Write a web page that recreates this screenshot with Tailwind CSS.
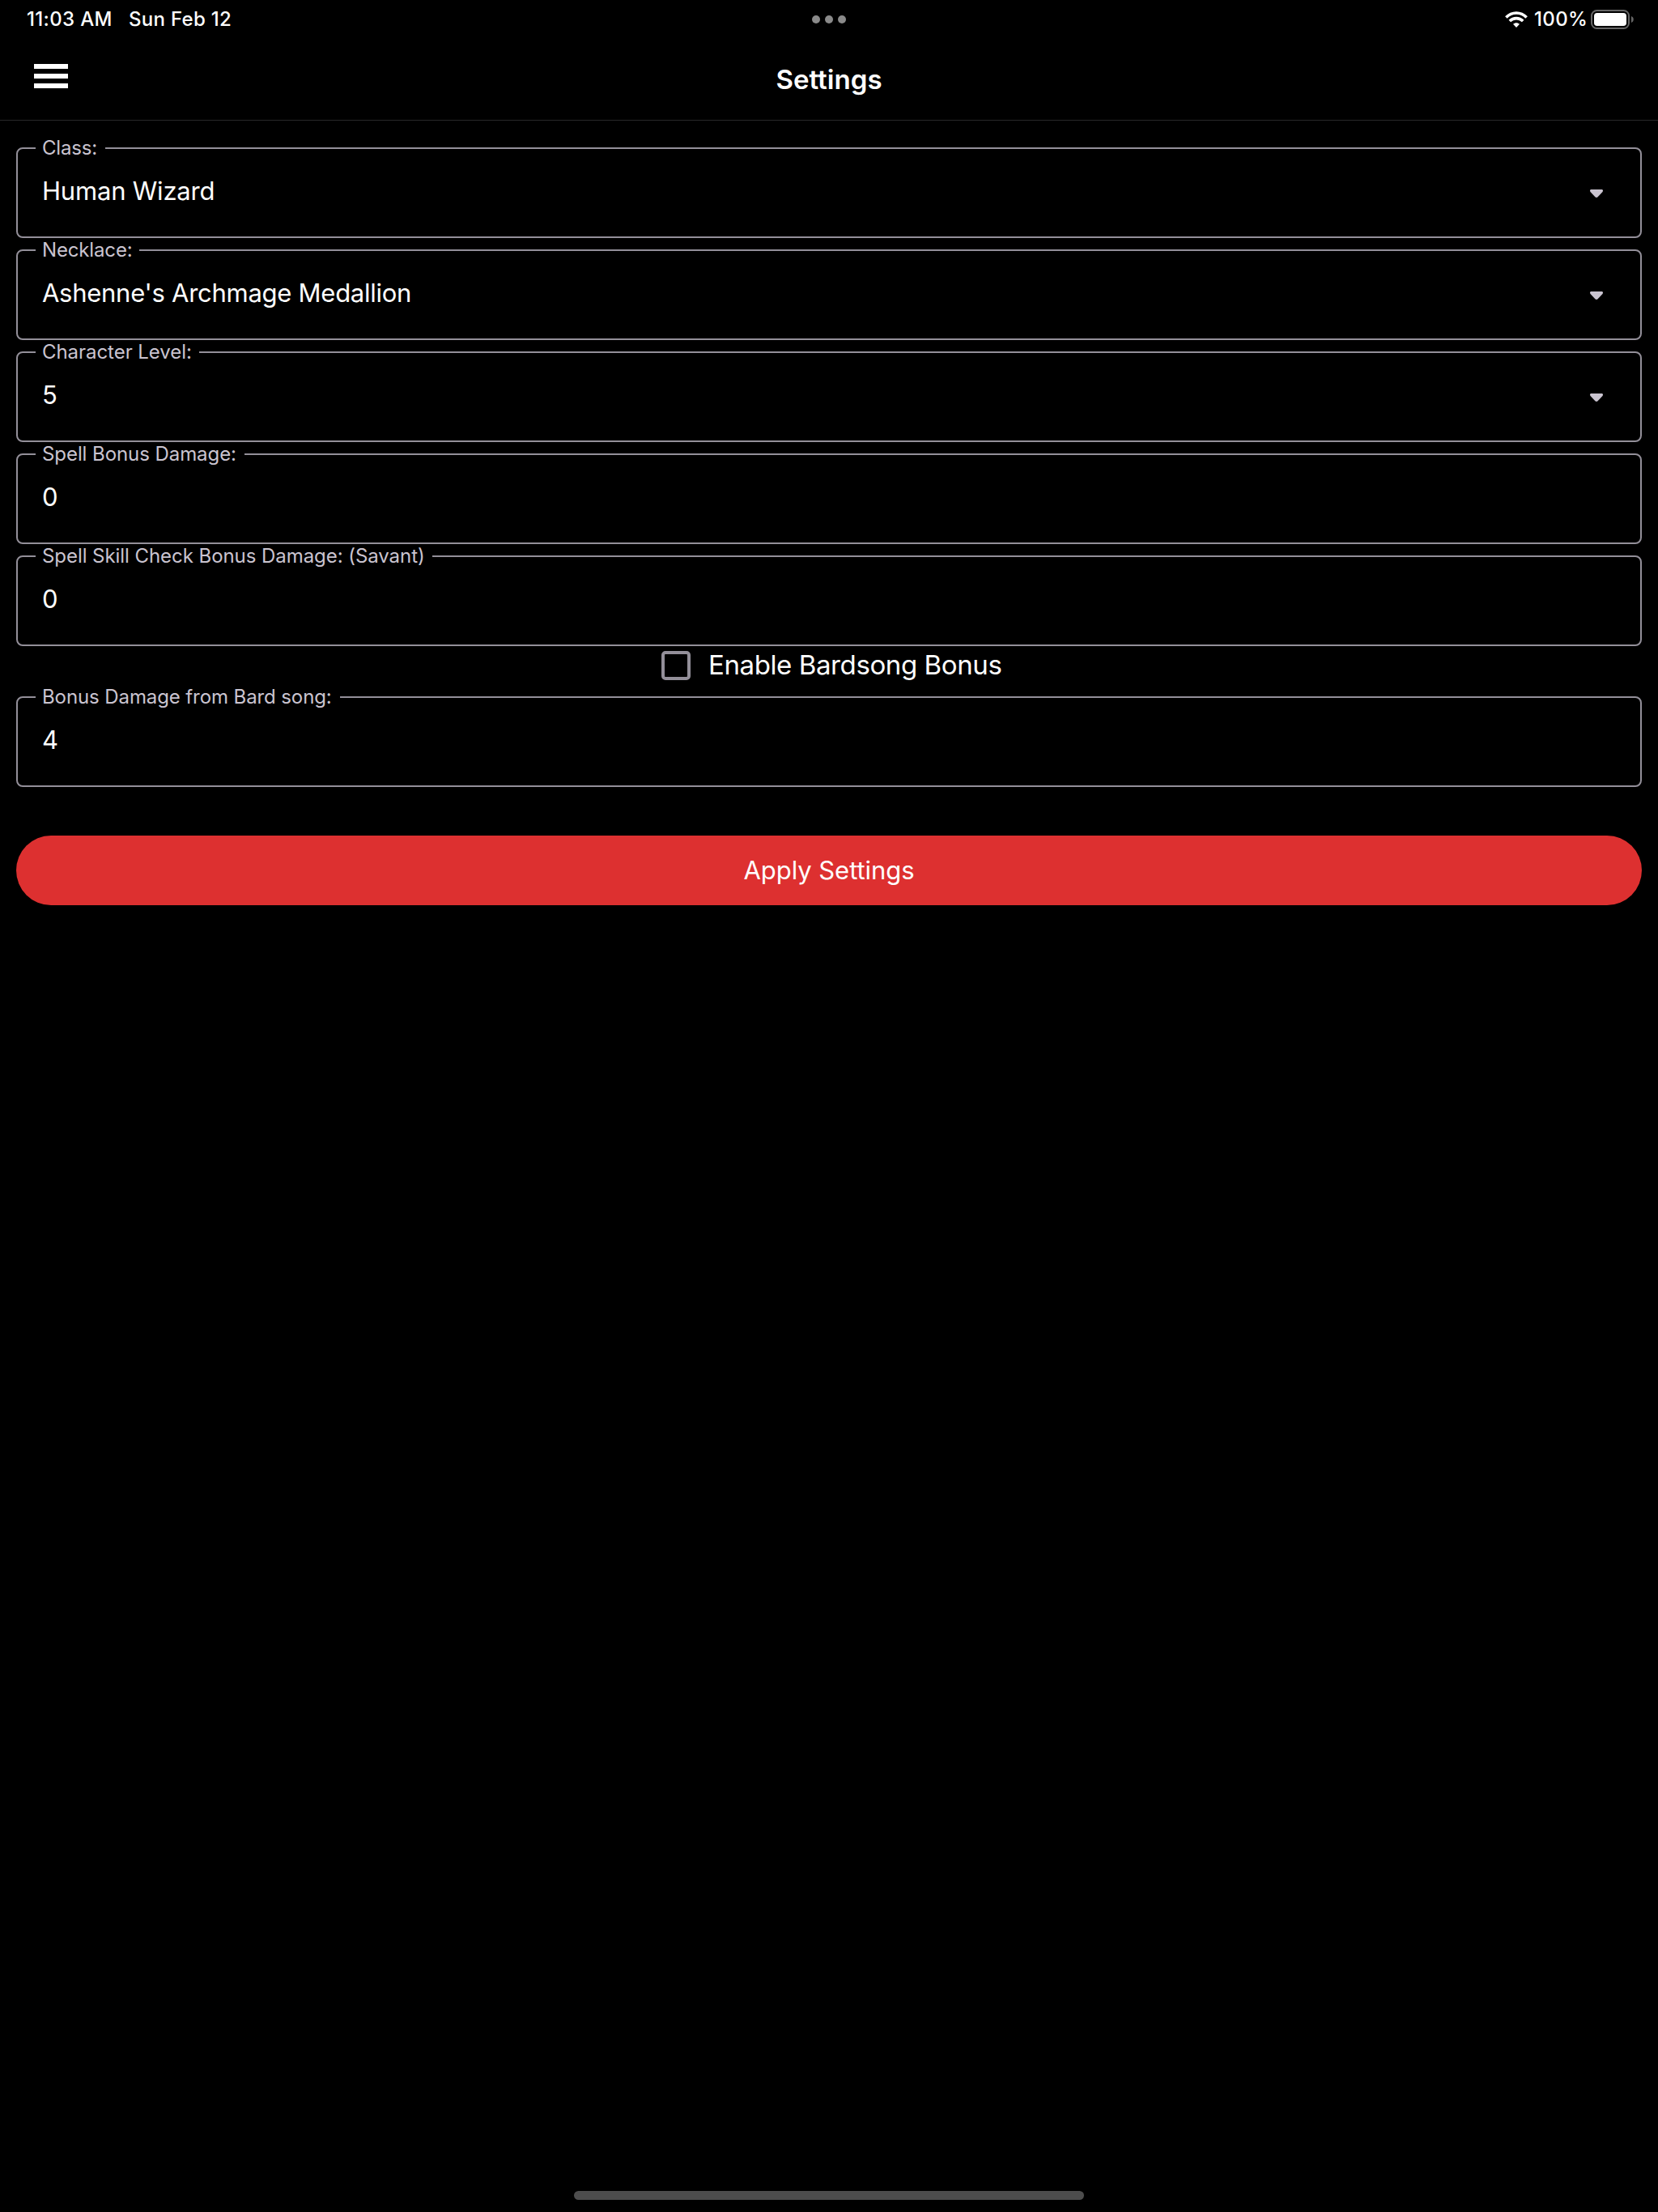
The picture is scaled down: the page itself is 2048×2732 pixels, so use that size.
<!DOCTYPE html>
<html lang="en">
<head>
<meta charset="utf-8">
<title>Settings</title>
<script src="https://cdn.jsdelivr.net/npm/@tailwindcss/browser@4"></script>
</head>
<body class="bg-black">
<div class="flex h-[2732px] w-[2048px] flex-col overflow-hidden bg-black font-['Inter',sans-serif] text-white">

  <!-- Status bar -->
  <div class="grid h-12 shrink-0 grid-cols-3 items-center px-8 text-[24px] leading-[48px] font-medium">
    <div class="flex items-center">
      <span class="w-[127px] pl-px tracking-[0.35px]">11:03 AM</span>
      <span class="tracking-[0.3px]">Sun Feb 12</span>
    </div>
    <div class="flex items-center justify-center gap-1.5">
      <span class="size-2.5 rounded-full bg-[#8a8a8a]"></span>
      <span class="size-2.5 rounded-full bg-[#8a8a8a]"></span>
      <span class="size-2.5 rounded-full bg-[#8a8a8a]"></span>
    </div>
    <div class="-mr-0.5 flex items-center justify-end">
      <svg class="mr-2 h-5 w-7" viewBox="0 0 28 20" fill="none" stroke="#fff" stroke-width="3.6">
        <path d="M1.4 7.6C8.4 .2 19.6 .2 26.6 7.6"/>
        <path d="M5.8 12.1C10.4 7.5 17.6 7.5 22.2 12.1"/>
        <path d="M14 20l-4-4.2c2.2-2.2 5.800-2.200 8 0z" fill="#fff" stroke="none"/>
      </svg>
      <span class="w-[70px] tracking-[0.35px]">100%</span>
      <svg class="h-6 w-[53px]" viewBox="0 0 53 24">
        <rect x="1" y="1" width="46" height="22" rx="6.500" fill="none" stroke="#666" stroke-width="2"/>
        <rect x="4" y="4" width="40" height="16" rx="3.800" fill="#fff"/>
        <path d="M50 8c3.700 1.300 3.700 6.700 0 8z" fill="#666"/>
      </svg>
    </div>
  </div>

  <!-- Navigation header -->
  <header class="grid h-[101px] shrink-0 grid-cols-3 border-b border-[#272729] px-[42px]">
    <div class="flex flex-col gap-1.5 pt-[31px]">
      <span class="h-1.5 w-[42px] bg-white"></span>
      <span class="h-1.5 w-[42px] bg-white"></span>
      <span class="h-1.5 w-[42px] bg-white"></span>
    </div>
    <h1 class="text-center text-[33px] leading-[100px] font-semibold tracking-[0.04px]">Settings</h1>
  </header>

  <!-- Form -->
  <main class="flex flex-col px-5 pt-[33px]">
    <div class="flex flex-col gap-3.5">
      <div class="relative flex h-28 items-start justify-between rounded-lg border-2 border-[#938f99] pr-[46px] pl-[30px]">
        <span class="absolute -top-4 left-[22px] w-[86px] bg-black pl-2 text-[24px] leading-[30px] tracking-[-0.2px] whitespace-nowrap text-[#cac4d0]">Class:</span>
        <span class="pt-8 text-[31px] leading-10 tracking-[-0.2px]">Human Wizard</span>
        <svg class="mt-[50px] h-2.5 w-4" viewBox="0 0 16 10" fill="#cac4d0"><path d="M1.500 0h13c1.500 0 2 1.800 1 2.900L9.600 9.200c-1 1-2.200 1-3.200 0L.5 2.900C-.5 1.800 0 0 1.500 0z"/></svg>
      </div>
      <div class="relative flex h-28 items-start justify-between rounded-lg border-2 border-[#938f99] pr-[46px] pl-[30px]">
        <span class="absolute -top-4 left-[22px] w-[128px] bg-black pl-2 text-[24px] leading-[30px] tracking-[-0.15px] whitespace-nowrap text-[#cac4d0]">Necklace:</span>
        <span class="pt-8 text-[31px] leading-10 tracking-[-0.27px]">Ashenne's Archmage Medallion</span>
        <svg class="mt-[50px] h-2.5 w-4" viewBox="0 0 16 10" fill="#cac4d0"><path d="M1.500 0h13c1.500 0 2 1.800 1 2.900L9.600 9.200c-1 1-2.200 1-3.200 0L.5 2.900C-.5 1.800 0 0 1.500 0z"/></svg>
      </div>
      <div class="relative flex h-28 items-start justify-between rounded-lg border-2 border-[#938f99] pr-[46px] pl-[30px]">
        <span class="absolute -top-4 left-[22px] w-[202px] bg-black pl-2 text-[24px] leading-[30px] tracking-[-0.05px] whitespace-nowrap text-[#cac4d0]">Character Level:</span>
        <span class="pt-8 text-[31px] leading-10">5</span>
        <svg class="mt-[50px] h-2.5 w-4" viewBox="0 0 16 10" fill="#cac4d0"><path d="M1.500 0h13c1.500 0 2 1.800 1 2.900L9.600 9.200c-1 1-2.200 1-3.200 0L.5 2.900C-.5 1.800 0 0 1.500 0z"/></svg>
      </div>
      <div class="relative flex h-28 items-start rounded-lg border-2 border-[#938f99] pl-[30px]">
        <span class="absolute -top-4 left-[22px] w-[258px] bg-black pl-2 text-[24px] leading-[30px] tracking-[-0.07px] whitespace-nowrap text-[#cac4d0]">Spell Bonus Damage:</span>
        <span class="pt-8 text-[31px] leading-10">0</span>
      </div>
      <div class="relative flex h-28 items-start rounded-lg border-2 border-[#938f99] pl-[30px]">
        <span class="absolute -top-4 left-[22px] w-[490px] bg-black pl-2 text-[24px] leading-[30px] tracking-[-0.06px] whitespace-nowrap text-[#cac4d0]">Spell Skill Check Bonus Damage: (Savant)</span>
        <span class="pt-8 text-[31px] leading-10">0</span>
      </div>
    </div>

    <div class="flex h-[62px] items-start pt-1 pl-[797px]">
      <span class="mt-0.5 size-9 rounded-[5px] border-4 border-[#938f99]"></span>
      <span class="pl-[22px] text-[33px] leading-[39px] tracking-[-0.4px]">Enable Bardsong Bonus</span>
    </div>

    <div class="relative flex h-28 items-start rounded-lg border-2 border-[#938f99] pl-[30px]">
      <span class="absolute -top-4 left-[22px] w-[376px] bg-black pl-2 text-[24px] leading-[30px] tracking-[-0.1px] whitespace-nowrap text-[#cac4d0]">Bonus Damage from Bard song:</span>
      <span class="pt-8 text-[31px] leading-10">4</span>
    </div>

    <button class="mt-[60px] h-[86px] rounded-full bg-[#dd3030] text-[31px] leading-[86px] tracking-[-0.06px]">Apply Settings</button>
  </main>

  <!-- Home indicator -->
  <div class="mt-auto mb-[15px] h-[11px] w-[630px] self-center rounded-full bg-[#4d4d4d]"></div>
</div>
</body>
</html>
